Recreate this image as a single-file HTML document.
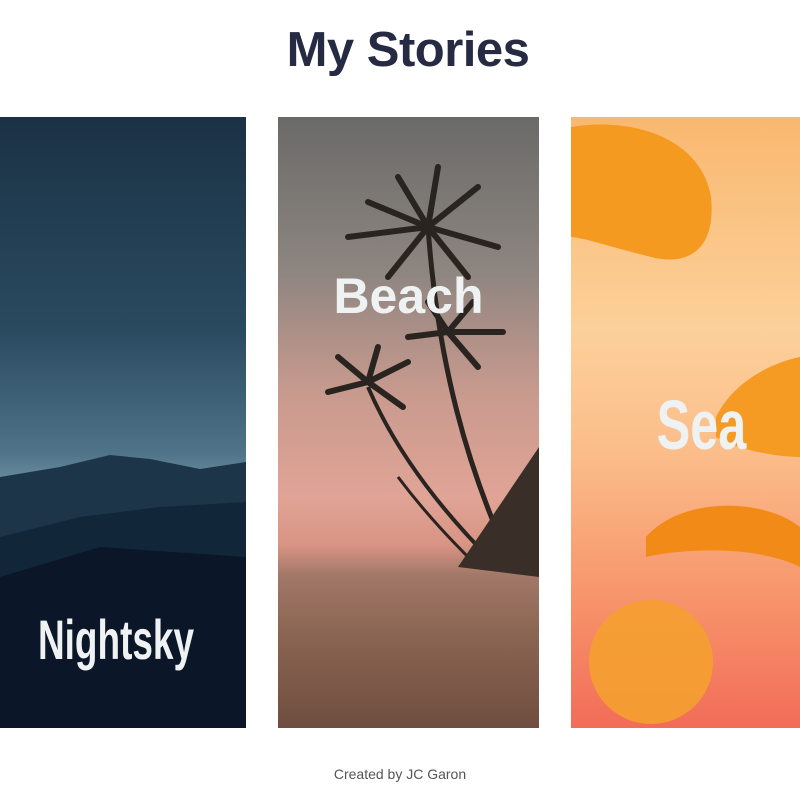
<!DOCTYPE html>
<html><head><meta charset="utf-8"><style>
html,body{margin:0;padding:0;background:#fff;width:800px;height:800px;overflow:hidden;font-family:"Liberation Sans",sans-serif}
h1{position:absolute;top:22px;left:8px;width:800px;text-align:center;margin:0;font-size:49px;font-weight:700;color:#262a42;letter-spacing:-0.5px}
.card{position:absolute;top:117px;height:611px;overflow:hidden}
.c1{left:0;width:246px;background:linear-gradient(180deg,#1b3245 0%,#2a4a60 35%,#4f7388 55%,#6d8ea0 60%,#1f3a4e 66%,#13263a 80%,#0a1426 100%)}
.c2{left:278px;width:261px;background:linear-gradient(180deg,#6a6a68 0%,#8d8580 25%,#c89a8e 45%,#e0a496 62%,#d99484 70%,#a27868 75%,#8a6452 85%,#6f4e3f 100%)}
.c3{left:571px;width:229px;background:linear-gradient(180deg,#f9b870 0%,#fcd09a 35%,#fbbd8a 55%,#f7926a 80%,#f26c58 100%)}
.t{position:absolute;color:#eef2f2;font-weight:700;text-align:center;width:100%}
.narrow{font-family:"Liberation Sans Narrow","Liberation Sans",sans-serif;transform:scaleX(0.72)}
.foot{position:absolute;top:766px;width:800px;text-align:center;font-size:14px;color:#555}
</style></head><body>
<h1>My Stories</h1>
<div class="card c1">
<svg width="246" height="611" style="position:absolute;left:0;top:0">
<polygon points="0,360 60,350 110,338 150,342 200,352 246,345 246,611 0,611" fill="#1d3548"/>
<polygon points="0,420 80,400 160,390 246,385 246,611 0,611" fill="#12263a"/>
<polygon points="0,460 100,430 246,440 246,611 0,611" fill="#0b1628"/>
</svg>
<div class="t narrow" style="top:490px;left:-7px;font-size:56px;font-weight:700;transform:scaleX(0.66)">Nightsky</div>
</div>
<div class="card c2">
<svg width="261" height="611" style="position:absolute;left:0;top:0" stroke="#2a2420" fill="none">
<path d="M150,110 C160,250 190,350 230,440" stroke-width="5"/>
<path d="M90,270 C120,340 170,400 215,445" stroke-width="4"/>
<path d="M120,360 C150,400 180,430 200,450" stroke-width="3"/>
<g stroke-width="6" stroke-linecap="round">
<path d="M150,110 L70,120 M150,110 L90,85 M150,110 L120,60 M150,110 L160,50 M150,110 L200,70 M150,110 L220,130 M150,110 L190,160 M150,110 L110,160"/>
<path d="M90,265 L50,275 M90,265 L60,240 M90,265 L100,230 M90,265 L130,245 M90,265 L125,290"/>
<path d="M170,215 L130,220 M170,215 L150,185 M170,215 L195,185 M170,215 L225,215 M170,215 L200,250"/>
</g>
<polygon points="180,450 261,330 261,460" fill="#3a2e28" stroke="none"/>
</svg>
<div class="t" style="top:150px;font-size:50px">Beach</div>
</div>
<div class="card c3">
<svg width="229" height="611" style="position:absolute;left:0;top:0">
<path d="M0,10 C60,0 130,20 140,80 C145,130 120,150 80,140 C40,130 10,120 0,120Z" fill="#f49a20"/>
<path d="M75,420 C110,380 190,380 229,410 L229,450 C190,430 120,430 75,440Z" fill="#f28a18"/>
<path d="M145,300 C170,250 229,240 229,240 L229,340 C200,340 160,330 145,320Z" fill="#f59a22"/>
<circle cx="80" cy="545" r="62" fill="#f5a030" opacity="0.9"/>
</svg>
<div class="t narrow" style="top:268px;font-size:70px;left:16px">Sea</div>
</div>
<div class="foot">Created by JC Garon</div>
</body></html>
